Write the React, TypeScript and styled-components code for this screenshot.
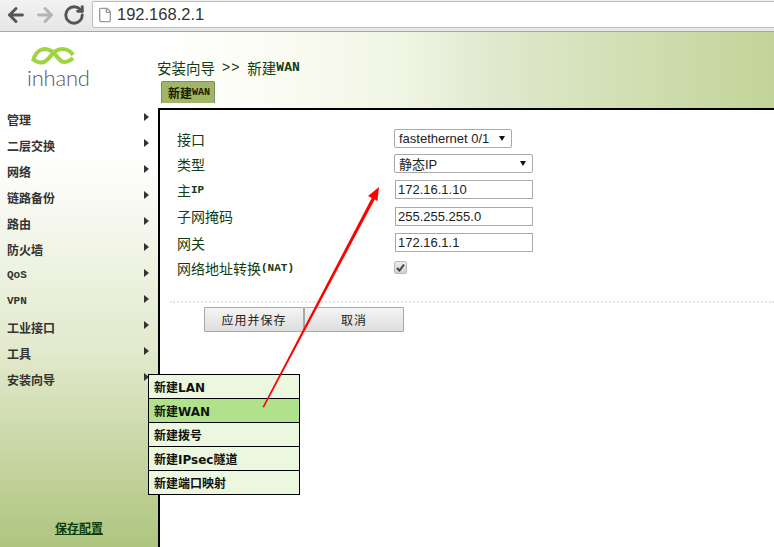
import React from 'react';
import styled, { createGlobalStyle } from 'styled-components';
import { ArrowLeft, ArrowRight, RotateCw, File } from 'lucide-react';

const GlobalStyle = createGlobalStyle`
  html, body {
    margin: 0;
    padding: 0;
    background: #fff;
    overflow: hidden;
  }
`;

const Page = styled.div`
  position: relative;
  width: 774px;
  height: 547px;
  overflow: hidden;
  display: flex;
  flex-direction: column;
  font-family: 'Noto Sans CJK SC', 'Liberation Sans', sans-serif;
`;

const Toolbar = styled.div`
  flex: 0 0 32px;
  box-sizing: border-box;
  height: 32px;
  display: flex;
  align-items: center;
  gap: 7px;
  padding: 0 0 2px 5px;
  background: linear-gradient(#f2f2f2, #e6e6e6);
  border-bottom: 1px solid #a8a8a8;
`;

const NavButton = styled.span<{ $off?: boolean }>`
  display: flex;
  color: ${(props) => (props.$off ? '#b4b4b4' : '#555')};
`;

const Address = styled.div`
  flex: 1;
  align-self: flex-start;
  height: 27px;
  margin: 1px -3px 0 0;
  box-sizing: border-box;
  display: flex;
  align-items: center;
  gap: 4px;
  padding-left: 4px;
  background: #fff;
  border: 1px solid #bdbdbd;
  border-radius: 2px;
  color: #333;
  font: 16.5px 'Liberation Sans', sans-serif;
`;

const Body = styled.div`
  flex: 1;
  display: flex;
  min-height: 0;
`;

const Sidebar = styled.aside`
  flex: 0 0 158px;
  display: flex;
  flex-direction: column;
  background: linear-gradient(#fff 0, #fff 120px, #e2e9cc 320px, #aec57e 515px);
`;

const Logo = styled.div`
  height: 55px;
  padding: 15px 0 0 27px;
`;

const LogoMark = styled.svg`
  display: block;
  margin-left: 3px;
`;

const LogoText = styled.div`
  margin-top: 1px;
  color: #5f5656;
  font: 300 22px/22px Lato, 'Liberation Sans', sans-serif;
  letter-spacing: -0.2px;
`;

const Menu = styled.nav`
  display: flex;
  flex-direction: column;
  margin-top: 4px;
`;

const MenuRow = styled.div`
  height: 26px;
  display: flex;
  align-items: center;
  justify-content: space-between;
  padding: 0 9px 0 7px;
  color: #333;
  font-size: 12px;
  font-weight: 700;
`;

const MenuLabel = styled.span<{ $latin?: boolean }>`
  font-family: ${(props) => (props.$latin ? "'Liberation Mono', monospace" : "'Noto Sans CJK SC', sans-serif")};
  font-size: ${(props) => (props.$latin ? '11px' : '12px')};
`;

const Caret = styled.i`
  width: 0;
  height: 0;
  margin-top: -4px;
  border-left: 5px solid #333;
  border-top: 4px solid transparent;
  border-bottom: 4px solid transparent;
`;

const SaveLink = styled.a`
  margin-top: auto;
  margin-bottom: 11px;
  align-self: center;
  color: #0b3d0b;
  font-size: 12px;
  font-weight: 700;
  text-decoration: underline;
`;

const Main = styled.main`
  flex: 1;
  display: flex;
  flex-direction: column;
  min-width: 0;
`;

const Header = styled.header`
  height: 76px;
  box-sizing: border-box;
  padding: 25px 0 0 0;
  background: linear-gradient(90deg, #fff 0, #fafbf2 130px, #f0f5e4 242px, #dfe8cc 342px, #c2d498 616px);
`;

const Crumb = styled.div`
  display: flex;
  align-items: center;
  height: 20px;
  margin-left: -1px;
  color: #123d12;
  font-size: 14.5px;
`;

const CrumbArrow = styled.span`
  margin: 0 7px;
  font: 14px 'Liberation Sans', sans-serif;
  letter-spacing: 1px;
`;

const Mono = styled.span<{ $size: number }>`
  font-family: 'Liberation Mono', monospace;
  font-size: ${(props) => props.$size}px;
  font-weight: 700;
`;

const Tab = styled.div`
  display: inline-flex;
  align-items: center;
  box-sizing: border-box;
  height: 22px;
  margin: 4px 0 0 3px;
  padding: 0 4px 0 6px;
  background: #9fb667;
  border: 1px solid #7f8f66;
  border-bottom: 0;
  border-radius: 2px 2px 0 0;
  color: #1a1a00;
  font-size: 12px;
  font-weight: 700;
`;

const Content = styled.section`
  flex: 1;
  box-sizing: border-box;
  padding: 16px 0 0 17px;
  border-top: 2px solid #000;
  border-left: 2px solid #000;
`;

const Form = styled.div`
  display: grid;
  grid-template-columns: 217px 1fr;
  grid-template-rows: 25px 25px 27px 26px 27px 23px;
  align-items: center;
`;

const Label = styled.label`
  display: flex;
  align-items: center;
  color: #123d12;
  font-size: 14px;
  white-space: nowrap;
`;

const Select = styled.div<{ $width: number }>`
  width: ${(props) => props.$width}px;
  height: 19px;
  box-sizing: border-box;
  display: flex;
  align-items: center;
  justify-content: space-between;
  padding: 0 6px 0 4px;
  border: 1px solid #a9a9a9;
  border-radius: 2px;
  background: #fff;
  color: #222;
  font: 13px 'Liberation Sans', 'Noto Sans CJK SC', sans-serif;
`;

const SelectArrow = styled.i`
  width: 0;
  height: 0;
  border-top: 5px solid #111;
  border-left: 3.5px solid transparent;
  border-right: 3.5px solid transparent;
`;

const Input = styled.input`
  width: 138px;
  height: 19px;
  box-sizing: border-box;
  padding: 0 2px;
  margin-left: 1px;
  border: 1px solid #a9a9a9;
  color: #222;
  font: 13px 'Liberation Sans', sans-serif;
  outline: none;
`;

const Check = styled.span`
  width: 11px;
  height: 11px;
  display: flex;
  align-items: center;
  justify-content: center;
  border: 1px solid #bbb;
  border-radius: 2px;
  background: linear-gradient(#eee, #cfcfcf);
`;

const Divider = styled.div`
  margin: 22px 0 0 -7px;
  border-top: 2px dotted #e6e6e6;
`;

const Buttons = styled.div`
  display: flex;
  margin: 4px 0 0 27px;
`;

const Button = styled.button`
  width: 100px;
  height: 25px;
  padding: 0;
  border: 1px solid #a9a9a9;
  border-radius: 1px;
  background: linear-gradient(#f4f4f4, #dedede);
  color: #222;
  font: 12px 'Noto Sans CJK SC', sans-serif;
  letter-spacing: 1px;
`;

const Flyout = styled.div`
  position: absolute;
  left: 148px;
  top: 374px;
  width: 152px;
  box-sizing: border-box;
  border: 1px solid #000;
  border-bottom: 0;
`;

const FlyoutItem = styled.div<{ $active?: boolean }>`
  height: 24px;
  box-sizing: border-box;
  display: flex;
  align-items: center;
  padding-left: 5px;
  border-bottom: 1px solid #000;
  background: ${(props) => (props.$active ? '#b0e28c' : '#ebf8df')};
  color: #111;
  font: 700 12px 'DejaVu Sans', 'Noto Sans CJK SC', sans-serif;
`;

const Overlay = styled.svg`
  position: absolute;
  left: 0;
  top: 0;
  pointer-events: none;
`;

const menuItems = ['管理', '二层交换', '网络', '链路备份', '路由', '防火墙', 'QoS', 'VPN', '工业接口', '工具', '安装向导'];
const flyoutItems = ['新建LAN', '新建WAN', '新建拨号', '新建IPsec隧道', '新建端口映射'];

export default function App() {
  return (
    <Page>
      <GlobalStyle />
      <Toolbar>
        <NavButton><ArrowLeft size={22} strokeWidth={3.2} /></NavButton>
        <NavButton $off><ArrowRight size={22} strokeWidth={3.2} /></NavButton>
        <NavButton><RotateCw size={22} strokeWidth={3.2} /></NavButton>
        <Address>
          <File size={16} color="#999" />
          192.168.2.1
        </Address>
      </Toolbar>
      <Body>
        <Sidebar>
          <Logo>
            <LogoMark width="46" height="19" viewBox="0 0 46 19">
              <path d="M3 14C5 6 10 2 15 2c7 0 10 6 15 11 4 4 10 1 13-2" fill="none" stroke="#9fd33f" strokeWidth="4" />
              <path d="M43 8c-2-4-7-6-11-6-7 0-10 6-15 11-4 4-10 3-14-1" fill="none" stroke="#9fd33f" strokeWidth="4" />
            </LogoMark>
            <LogoText>inhand</LogoText>
          </Logo>
          <Menu>
            {menuItems.map((item) => (
              <MenuRow key={item}>
                <MenuLabel $latin={item === 'QoS' || item === 'VPN'}>{item}</MenuLabel>
                <Caret />
              </MenuRow>
            ))}
          </Menu>
          <SaveLink>保存配置</SaveLink>
        </Sidebar>
        <Main>
          <Header>
            <Crumb>
              安装向导
              <CrumbArrow>&gt;&gt;</CrumbArrow>
              新建<Mono $size={13}>WAN</Mono>
            </Crumb>
            <Tab>新建<Mono $size={10}>WAN</Mono></Tab>
          </Header>
          <Content>
            <Form>
              <Label>接口</Label>
              <Select $width={118}>fastethernet 0/1<SelectArrow /></Select>
              <Label>类型</Label>
              <Select $width={139}>静态IP<SelectArrow /></Select>
              <Label>主<Mono $size={11}>IP</Mono></Label>
              <Input readOnly value="172.16.1.10" />
              <Label>子网掩码</Label>
              <Input readOnly value="255.255.255.0" />
              <Label>网关</Label>
              <Input readOnly value="172.16.1.1" />
              <Label>网络地址转换<Mono $size={11}>(NAT)</Mono></Label>
              <Check>
                <svg width="9" height="9" viewBox="0 0 9 9">
                  <path d="M1 5l2.5 2.5L8 1.5" fill="none" stroke="#444" strokeWidth="2" />
                </svg>
              </Check>
            </Form>
            <Divider />
            <Buttons>
              <Button>应用并保存</Button>
              <Button>取消</Button>
            </Buttons>
          </Content>
        </Main>
      </Body>
      <Flyout>
        {flyoutItems.map((item, index) => (
          <FlyoutItem key={item} $active={index === 1}>{item}</FlyoutItem>
        ))}
      </Flyout>
      <Overlay width="774" height="547">
        <polygon points="262.5,407 264,407.5 375.5,198 372.5,196.5" fill="#f00" />
        <polygon points="379,187 368,196 377.5,201" fill="#f00" />
      </Overlay>
    </Page>
  );
}
